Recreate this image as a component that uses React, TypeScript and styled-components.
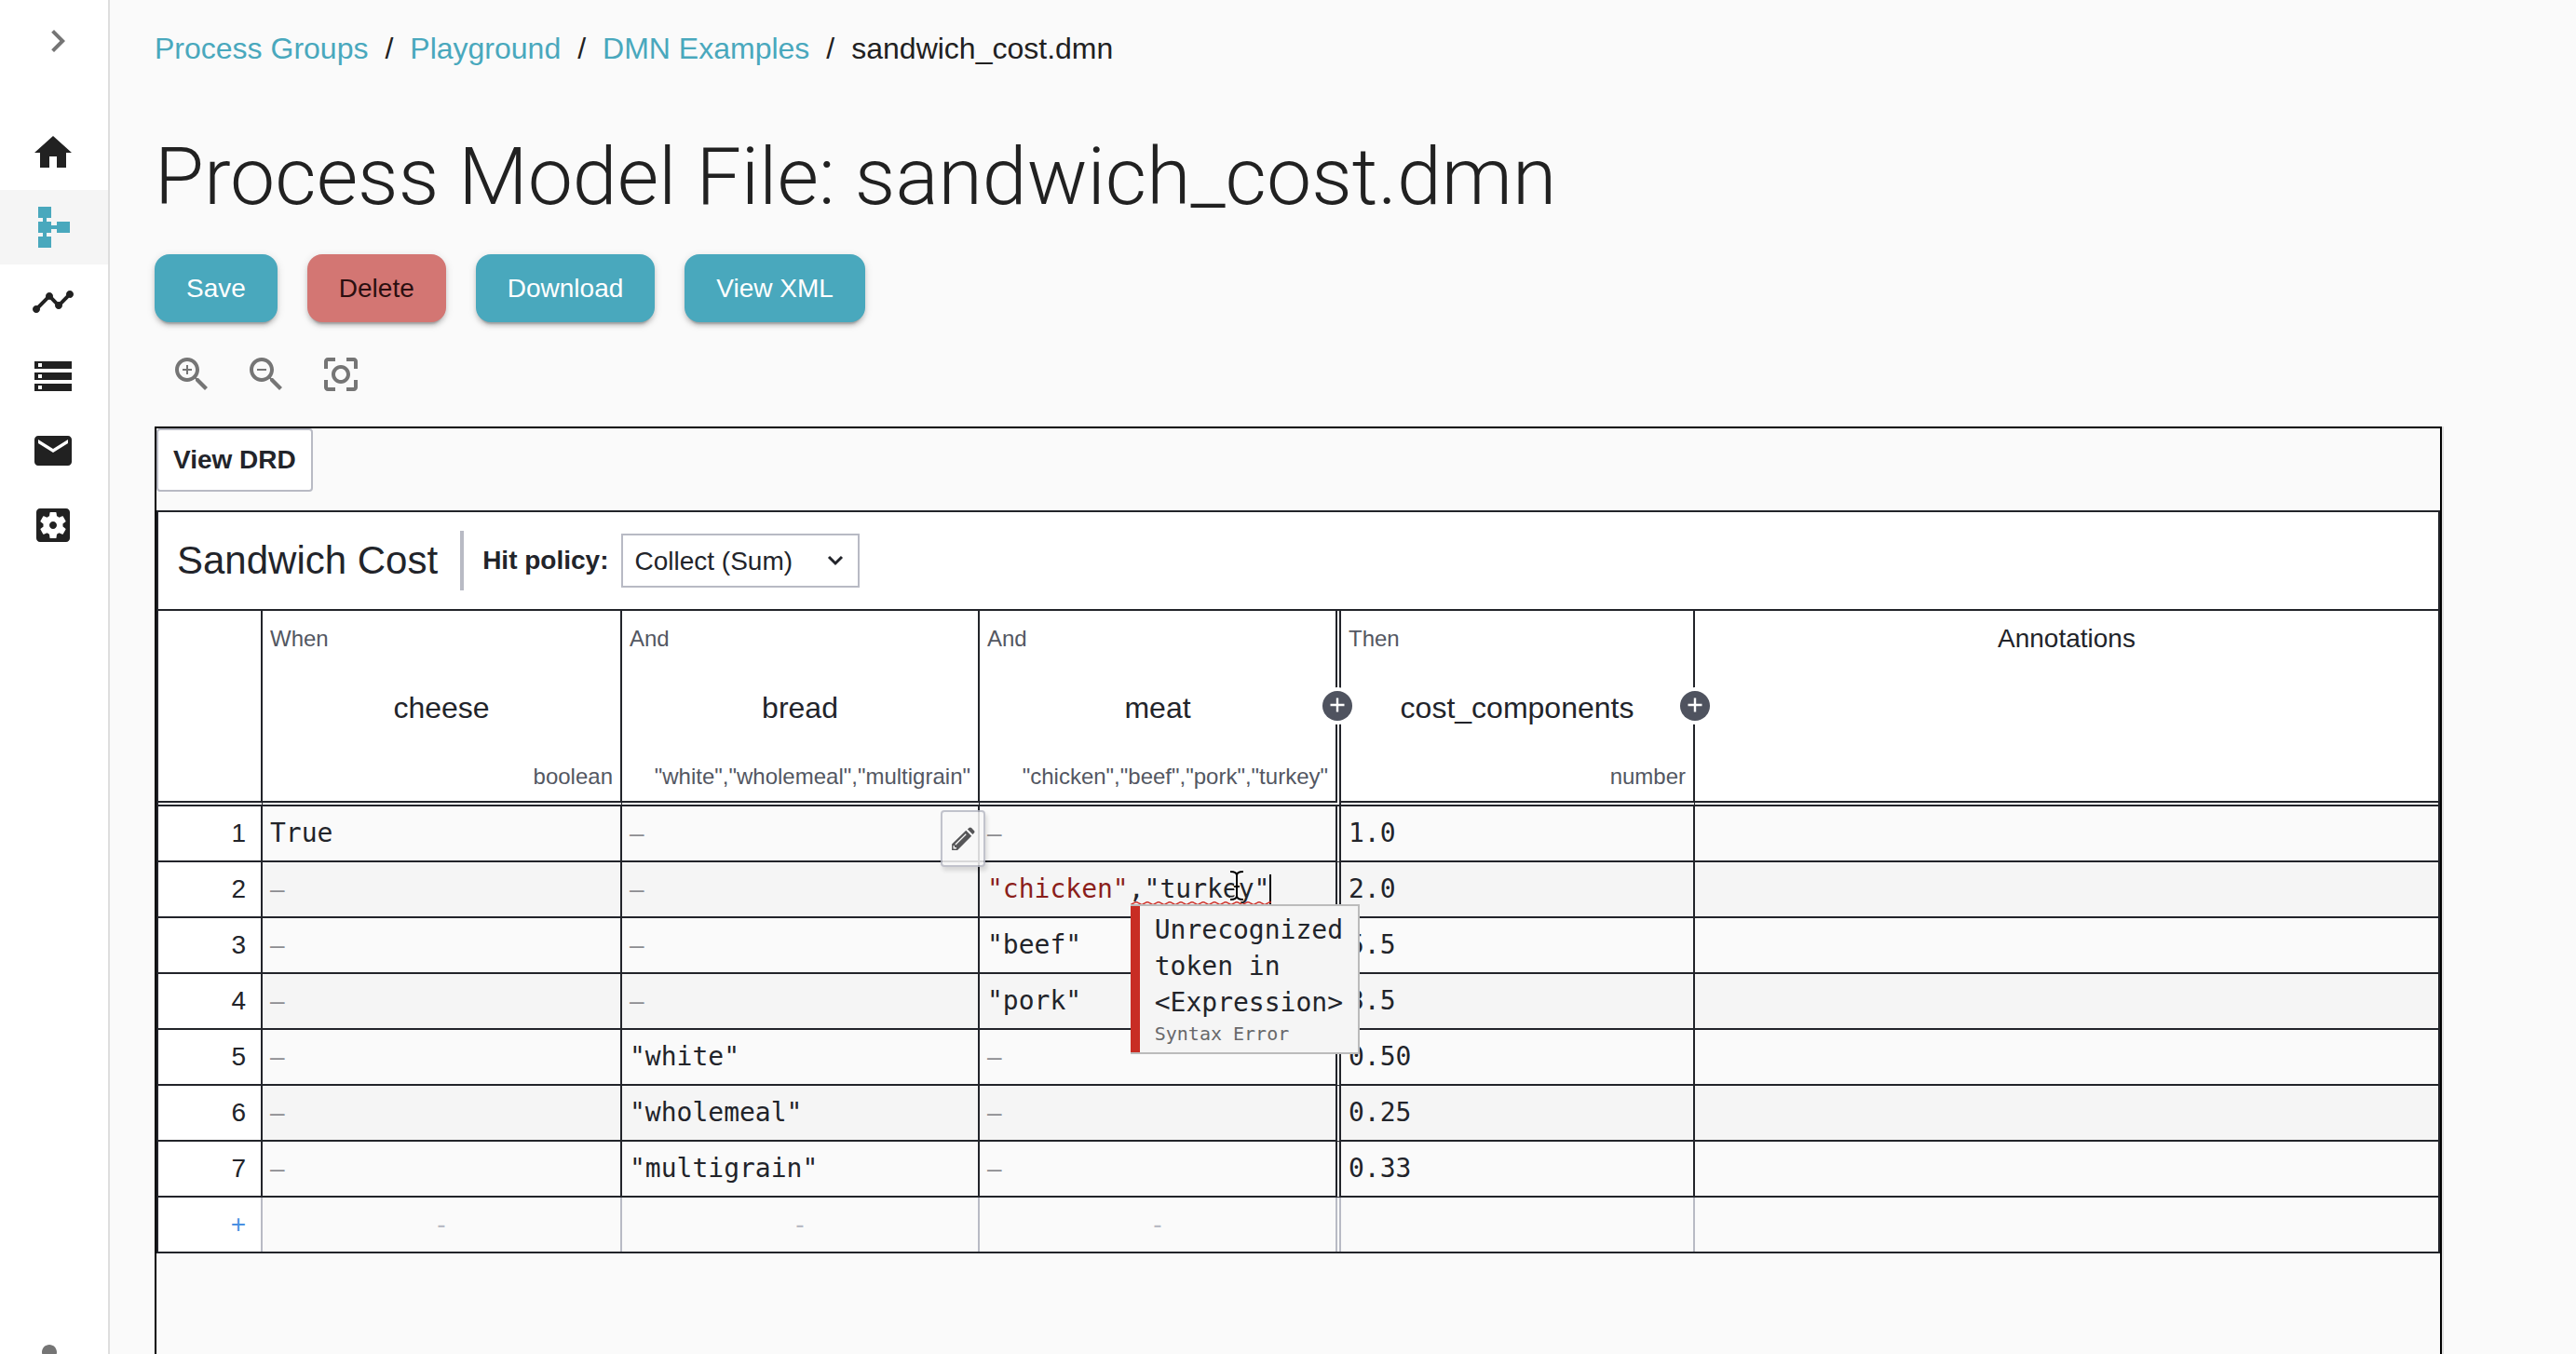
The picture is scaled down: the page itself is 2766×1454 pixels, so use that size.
import React from 'react';
import styled, { createGlobalStyle, css } from 'styled-components';

const sans = '"Liberation Sans", Arial, Helvetica, sans-serif';
const mono = '"DejaVu Sans Mono", Menlo, monospace';
const teal = '#49a8bd';
const ink = '#22242a';
const line = '#b8bac4';
const muted = '#757575';

const GlobalStyle = createGlobalStyle`
  *, *::before, *::after { box-sizing: border-box; }
  body { margin: 0; background: #fafafa; color: #212121; font-family: ${sans}; }
  button { font-family: inherit; cursor: pointer; }
`;

const Shell = styled.div`
  display: flex;
  height: 100vh;
  overflow: hidden;
`;

/* ---------- side navigation ---------- */

const Sidebar = styled.aside`
  flex: none;
  display: flex;
  flex-direction: column;
  width: 118px;
  background: #fff;
  border-right: 2px solid #dedede;
`;

const ExpandButton = styled.button`
  align-self: flex-start;
  margin: 20px 0 56px 38px;
  padding: 0;
  height: 48px;
  border: 0;
  background: none;
  color: ${muted};
`;

const NavList = styled.nav`
  display: flex;
  flex-direction: column;
`;

const NavLink = styled.a<{ $active?: boolean }>`
  display: flex;
  align-items: center;
  height: 80px;
  padding-left: 33px;
  color: ${p => (p.$active ? teal : '#212121')};
  background: ${p => (p.$active ? '#f5f5f5' : 'transparent')};
`;

const AccountButton = styled.button`
  align-self: flex-start;
  height: 48px;
  margin: auto 0 -30px 29px;
  padding: 0;
  border: 0;
  background: none;
  color: ${muted};
`;

const Glyph = styled.svg`
  display: block;
  flex: none;
  width: 48px;
  height: 48px;
  fill: currentColor;
`;

const Icon = ({ d }: { d: string }) => (
  <Glyph viewBox="0 0 24 24" aria-hidden="true"><path d={d} /></Glyph>
);

const icons = {
  chevron: 'M10 6 8.59 7.41 13.17 12l-4.58 4.59L10 18l6-6z',
  home: 'M10 20v-6h4v6h5v-8h3L12 3 2 12h3v8z',
  schema: 'M14 9v2h-3V9H8.5V7H11V1H4v6h2.5v2H4v6h2.5v2H4v6h7v-6H8.5v-2H11v-2h3v2h7V9h-7z',
  timeline: 'M23 8c0 1.1-.9 2-2 2-.18 0-.35-.02-.51-.07l-3.56 3.55c.05.16.07.34.07.52 0 1.1-.9 2-2 2s-2-.9-2-2c0-.18.02-.36.07-.52l-2.55-2.55c-.16.05-.34.07-.52.07s-.36-.02-.52-.07l-4.55 4.56c.05.16.07.33.07.51 0 1.1-.9 2-2 2s-2-.9-2-2 .9-2 2-2c.18 0 .35.02.51.07l4.56-4.55C8.02 9.36 8 9.18 8 9c0-1.1.9-2 2-2s2 .9 2 2c0 .18-.02.36-.07.52l2.55 2.55c.16-.05.34-.07.52-.07s.36.02.52.07l3.55-3.56C19.02 8.35 19 8.18 19 8c0-1.1.9-2 2-2s2 .9 2 2z',
  storage: 'M2 20h20v-4H2v4zm2-3h2v2H4v-2zM2 4v4h20V4H2zm4 3H4V5h2v2zm-4 7h20v-4H2v4zm2-3h2v2H4v-2z',
  mail: 'M20 4H4c-1.1 0-1.99.9-1.99 2L2 18c0 1.1.9 2 2 2h16c1.1 0 2-.9 2-2V6c0-1.1-.9-2-2-2zm0 4-8 5-8-5V6l8 5 8-5v2z',
  settings: 'M12 10c-1.1 0-2 .9-2 2s.9 2 2 2 2-.9 2-2-.9-2-2-2zm7-7H5c-1.11 0-2 .9-2 2v14c0 1.1.89 2 2 2h14c1.11 0 2-.9 2-2V5c0-1.1-.89-2-2-2zm-1.75 9c0 .23-.02.46-.05.68l1.48 1.16c.13.11.17.3.08.45l-1.4 2.42c-.09.15-.27.21-.43.15l-1.74-.7c-.36.28-.76.51-1.18.69l-.26 1.85c-.03.17-.18.3-.35.3h-2.8c-.17 0-.32-.13-.35-.29l-.26-1.85c-.43-.18-.82-.41-1.18-.69l-1.74.7c-.16.06-.34 0-.43-.15l-1.4-2.42c-.09-.15-.05-.34.08-.45l1.48-1.16c-.03-.23-.05-.46-.05-.69 0-.23.02-.46.05-.68l-1.48-1.16c-.13-.11-.17-.3-.08-.45l1.4-2.42c.09-.15.27-.21.43-.15l1.74.7c.36-.28.76-.51 1.18-.69l.26-1.85c.03-.17.18-.3.35-.3h2.8c.17 0 .32.13.35.29l.26 1.85c.43.18.82.41 1.18.69l1.74-.7c.16-.06.34 0 .43.15l1.4 2.42c.09.15.05.34-.08.45l-1.48 1.16c.03.23.05.46.05.69z',
  person: 'M12 12c2.21 0 4-1.79 4-4s-1.79-4-4-4-4 1.79-4 4 1.79 4 4 4zm0 2c-2.67 0-8 1.34-8 4v2h16v-2c0-2.66-5.33-4-8-4z',
  zoomIn: 'M15.5 14h-.79l-.28-.27C15.41 12.59 16 11.11 16 9.5 16 5.91 13.09 3 9.5 3S3 5.91 3 9.5 5.91 16 9.5 16c1.61 0 3.09-.59 4.23-1.57l.27.28v.79l5 4.99L20.49 19l-4.99-5zm-6 0C7.01 14 5 11.99 5 9.5S7.01 5 9.5 5 14 7.01 14 9.5 11.99 14 9.5 14zm2.5-4h-2v2H9v-2H7V9h2V7h1v2h2v1z',
  zoomOut: 'M15.5 14h-.79l-.28-.27C15.41 12.59 16 11.11 16 9.5 16 5.91 13.09 3 9.5 3S3 5.91 3 9.5 5.91 16 9.5 16c1.61 0 3.09-.59 4.23-1.57l.27.28v.79l5 4.99L20.49 19l-4.99-5zm-6 0C7.01 14 5 11.99 5 9.5S7.01 5 9.5 5 14 7.01 14 9.5 11.99 14 9.5 14zM7 9h5v1H7z',
  fit: 'M5 15H3v4c0 1.1.9 2 2 2h4v-2H5v-4zM5 5h4V3H5c-1.1 0-2 .9-2 2v4h2V5zm14-2h-4v2h4v4h2V5c0-1.1-.9-2-2-2zm0 16h-4v2h4c1.1 0 2-.9 2-2v-4h-2v4zM12 7c-2.76 0-5 2.24-5 5s2.24 5 5 5 5-2.24 5-5-2.24-5-5-5zm0 8c-1.65 0-3-1.35-3-3s1.35-3 3-3 3 1.35 3 3-1.35 3-3 3z',
};

/* ---------- page head ---------- */

const Main = styled.main`
  flex: 1;
  min-width: 0;
  display: flex;
  flex-direction: column;
  padding: 28px 144px 0 48px;
`;

const Crumbs = styled.ol`
  display: flex;
  margin: 0 0 64px;
  padding: 0;
  list-style: none;
  font-size: 32px;
  line-height: 48px;

  li + li::before {
    content: '/';
    margin: 0 18px;
  }
`;

const CrumbLink = styled.a`
  color: ${teal};
  text-decoration: none;
`;

const Title = styled.h1`
  margin: 0 0 33px;
  font-family: Roboto, ${sans};
  font-size: 86px;
  font-weight: 300;
  line-height: 100px;
`;

const Actions = styled.div`
  display: flex;
  gap: 32px;
  margin-bottom: 16px;
`;

const Action = styled.button<{ $danger?: boolean }>`
  height: 73px;
  padding: 0 34px;
  border: 0;
  border-radius: 16px;
  background: ${p => (p.$danger ? '#d37673' : teal)};
  color: ${p => (p.$danger ? '#2b0f10' : '#fff')};
  font-size: 28px;
  box-shadow: 0 6px 2px -4px rgba(0, 0, 0, 0.2), 0 4px 4px rgba(0, 0, 0, 0.14), 0 2px 10px rgba(0, 0, 0, 0.12);
`;

const ZoomBar = styled.div`
  display: flex;
  margin-bottom: 16px;
`;

const ZoomButton = styled.button`
  padding: 16px;
  border: 0;
  background: none;
  color: ${muted};
`;

/* ---------- decision editor ---------- */

const Editor = styled.section`
  flex: 1;
  min-height: 0;
  border: 2px solid #000;
  border-bottom: 0;
  box-shadow: 2px 0 0 #dedede;
`;

const DrdButton = styled.button`
  display: block;
  height: 68px;
  margin-bottom: 20px;
  padding: 0 16px;
  border: 2px solid ${line};
  border-radius: 4px;
  background: #fff;
  color: ${ink};
  font-size: 28px;
  font-weight: 700;
`;

const Decision = styled.div`
  border: 2px solid ${ink};
  color: ${ink};
`;

const DecisionHead = styled.header`
  display: flex;
  align-items: center;
  height: 106px;
  padding-left: 20px;
  border-bottom: 2px solid ${ink};
  background: #fff;
  font-size: 28px;
`;

const DecisionName = styled.h2`
  margin: 0;
  padding-right: 24px;
  border-right: 4px solid ${line};
  font-size: 42px;
  font-weight: 400;
  line-height: 64px;
`;

const PolicyLabel = styled.label`
  margin: 0 14px 0 20px;
  font-weight: 700;
`;

const SelectBox = styled.span`
  position: relative;
  display: flex;
`;

const PolicySelect = styled.select`
  appearance: none;
  width: 256px;
  height: 58px;
  padding: 0 12px;
  border: 2px solid ${line};
  border-radius: 0;
  background: #fff;
  color: ${ink};
  font-family: inherit;
  font-size: 28px;
`;

const SelectArrow = styled.svg`
  position: absolute;
  right: 16px;
  top: 22px;
  width: 20px;
  height: 14px;
  pointer-events: none;
`;

const Table = styled.table`
  width: 100%;
  table-layout: fixed;
  border-collapse: separate;
  border-spacing: 0;
`;

const edge = css<{ $edge?: 'double' | 'none' }>`
  border-right: ${p => (p.$edge === 'double' ? '6px double' : p.$edge === 'none' ? '0 none' : '2px solid')} ${ink};
`;

const HeadCell = styled.th<{ $edge?: 'double' | 'none' }>`
  position: relative;
  padding: 0;
  border-bottom: 6px double ${ink};
  ${edge}
  background: #fff;
  font-weight: 400;
`;

const Clause = styled.div`
  display: flex;
  flex-direction: column;
  justify-content: space-between;
  height: 204px;
  padding: 16px 8px 12px;
  color: #535762;
  font-size: 24px;
  line-height: 28px;
  text-align: left;
`;

const ClauseName = styled.span`
  color: ${ink};
  font-size: 32px;
  line-height: 36px;
  text-align: center;
`;

const ClauseType = styled.span`
  text-align: right;
  white-space: nowrap;
`;

const Annotations = styled.div`
  height: 204px;
  padding-top: 14px;
  font-size: 28px;
  line-height: 32px;
`;

const AddClause = styled.button`
  position: absolute;
  z-index: 1;
  top: 86px;
  right: -18px;
  width: 32px;
  height: 32px;
  padding: 0;
  border: 0;
  border-radius: 50%;
  background: #4f535f;
  box-shadow: 0 0 0 4px #fff;

  svg { display: block; }
`;

const Rule = styled.tr`
  background: #fafafa;
  &:nth-child(even) { background: #f5f5f5; }
`;

const cell = css`
  height: 60px;
  padding: 0 8px;
  border-bottom: 2px solid ${ink};
  font-size: 28px;
  line-height: 32px;
`;

const IndexCell = styled.th`
  ${cell}
  padding-right: 16px;
  border-right: 2px solid ${ink};
  background: #fff;
  font-weight: 400;
  text-align: right;
`;

const RuleCell = styled.td<{ $edge?: 'double' | 'none'; $empty?: boolean }>`
  ${cell}
  ${edge}
  position: relative;
  color: ${p => (p.$empty ? '#8c8c90' : ink)};
  font-family: ${p => (p.$empty ? sans : mono)};
  white-space: nowrap;
`;

const NewRow = styled.tr`
  th, td {
    height: 58px;
    border-bottom: 0;
    border-right-color: ${line};
  }
  td {
    color: ${line};
    font-family: ${sans};
    text-align: center;
  }
`;

const AddRule = styled.button`
  padding: 0;
  border: 0;
  background: none;
  color: #4a90e2;
  font-size: 28px;
  line-height: 32px;
`;

const EditButton = styled.button`
  position: absolute;
  z-index: 2;
  left: -42px;
  top: 4px;
  display: flex;
  align-items: center;
  justify-content: center;
  width: 48px;
  height: 61px;
  padding: 0;
  border: 2px solid ${line};
  border-radius: 4px;
  background: #f8f8f8;
  box-shadow: 2px 4px 4px rgba(0, 0, 0, 0.14);
  opacity: 0.85;
`;

const StringToken = styled.span`
  color: #8b1f1b;
`;

const LintRange = styled.span`
  position: relative;
  display: inline-block;
  border-right: 2px solid #000;
`;

const Squiggle = styled.svg`
  position: absolute;
  left: 2px;
  top: 29px;
  width: 100%;
  height: 4px;
`;

const Pointer = styled.svg`
  position: absolute;
  left: 108px;
  top: -5px;
  width: 16px;
  height: 34px;
`;

const LintTip = styled.div`
  position: absolute;
  z-index: 3;
  left: 2px;
  top: 32px;
  width: 246px;
  border: 2px solid #bbb;
  border-left: 0;
  background: #f5f5f5;
  color: ${ink};
  white-space: normal;
`;

const LintMessage = styled.div`
  padding: 6px 12px 6px 16px;
  border-left: 10px solid #c82d24;
  line-height: 39px;
`;

const LintSource = styled.small`
  display: block;
  color: #68686a;
  font-size: 20px;
  line-height: 28px;
`;

const PlusMark = () => (
  <svg viewBox="0 0 32 32" width="32" height="32" aria-hidden="true">
    <path d="M16 7.5v15M8.5 15h15" stroke="#fff" strokeWidth="2.4" />
  </svg>
);

const navItems = [
  { label: 'Home', icon: icons.home },
  { label: 'Processes', icon: icons.schema, active: true },
  { label: 'Process Instances', icon: icons.timeline },
  { label: 'Data Stores', icon: icons.storage },
  { label: 'Messages', icon: icons.mail },
  { label: 'Configuration', icon: icons.settings },
];

const rules = [
  ['True', '', '', '1.0'],
  ['', '', 'edit', '2.0'],
  ['', '', '"beef"', '5.5'],
  ['', '', '"pork"', '3.5'],
  ['', '"white"', '', '0.50'],
  ['', '"wholemeal"', '', '0.25'],
  ['', '"multigrain"', '', '0.33'],
];

const EditedExpression = () => (
  <>
    <StringToken>"chicken"</StringToken>
    <LintRange>
      ,"turkey"
      <Squiggle aria-hidden="true">
        <defs>
          <pattern id="wave" width="12" height="4" patternUnits="userSpaceOnUse">
            <path d="M-1 3.5C2 3.5 4 .8 6 .8S10 3.5 13 3.5" fill="none" stroke="#d0332b" strokeWidth="1.4" />
          </pattern>
        </defs>
        <rect width="100%" height="4" fill="url(#wave)" />
      </Squiggle>
      <Pointer viewBox="0 0 16 34" aria-hidden="true">
        <path d="M1 2c4 0 7 1 7 4 0-3 3-4 7-4M1 32c4 0 7-1 7-4 0 3 3 4 7 4M8 5v24M5 18h6" fill="none" stroke="#fff" strokeWidth="5" />
        <path d="M1 2c4 0 7 1 7 4 0-3 3-4 7-4M1 32c4 0 7-1 7-4 0 3 3 4 7 4M8 5v24M5 18h6" fill="none" stroke="#000" strokeWidth="2" />
      </Pointer>
      <LintTip role="tooltip">
        <LintMessage>
          Unrecognized token in &lt;Expression&gt;
          <LintSource>Syntax Error</LintSource>
        </LintMessage>
      </LintTip>
    </LintRange>
  </>
);

export default function App() {
  return (
    <Shell>
      <GlobalStyle />
      <Sidebar>
        <ExpandButton aria-label="Expand navigation"><Icon d={icons.chevron} /></ExpandButton>
        <NavList>
          {navItems.map(item => (
            <NavLink key={item.label} href="#" aria-label={item.label} $active={item.active}>
              <Icon d={item.icon} />
            </NavLink>
          ))}
        </NavList>
        <AccountButton aria-label="Account"><Icon d={icons.person} /></AccountButton>
      </Sidebar>

      <Main>
        <nav aria-label="Breadcrumb">
          <Crumbs>
            <li><CrumbLink href="#">Process Groups</CrumbLink></li>
            <li><CrumbLink href="#">Playground</CrumbLink></li>
            <li><CrumbLink href="#">DMN Examples</CrumbLink></li>
            <li>sandwich_cost.dmn</li>
          </Crumbs>
        </nav>

        <Title>Process Model File: sandwich_cost.dmn</Title>

        <Actions>
          <Action>Save</Action>
          <Action $danger>Delete</Action>
          <Action>Download</Action>
          <Action>View XML</Action>
        </Actions>

        <ZoomBar>
          <ZoomButton aria-label="Zoom in"><Icon d={icons.zoomIn} /></ZoomButton>
          <ZoomButton aria-label="Zoom out"><Icon d={icons.zoomOut} /></ZoomButton>
          <ZoomButton aria-label="Fit to screen"><Icon d={icons.fit} /></ZoomButton>
        </ZoomBar>

        <Editor>
          <DrdButton>View DRD</DrdButton>
          <Decision>
            <DecisionHead>
              <DecisionName>Sandwich Cost</DecisionName>
              <PolicyLabel htmlFor="hit-policy">Hit policy:</PolicyLabel>
              <SelectBox>
                <PolicySelect id="hit-policy" defaultValue="sum">
                  <option value="sum">Collect (Sum)</option>
                </PolicySelect>
                <SelectArrow viewBox="0 0 20 14" aria-hidden="true">
                  <path d="M3 3l7 7 7-7" fill="none" stroke={ink} strokeWidth="3" />
                </SelectArrow>
              </SelectBox>
            </DecisionHead>

            <Table>
              <colgroup>
                <col width="112" />
                <col width="386" />
                <col width="384" />
                <col width="388" />
                <col width="380" />
                <col />
              </colgroup>
              <thead>
                <tr>
                  <HeadCell aria-label="Rule" />
                  <HeadCell>
                    <Clause>When<ClauseName>cheese</ClauseName><ClauseType>boolean</ClauseType></Clause>
                  </HeadCell>
                  <HeadCell>
                    <Clause>And<ClauseName>bread</ClauseName><ClauseType>"white","wholemeal","multigrain"</ClauseType></Clause>
                  </HeadCell>
                  <HeadCell $edge="double">
                    <Clause>And<ClauseName>meat</ClauseName><ClauseType>"chicken","beef","pork","turkey"</ClauseType></Clause>
                    <AddClause aria-label="Add input"><PlusMark /></AddClause>
                  </HeadCell>
                  <HeadCell>
                    <Clause>Then<ClauseName>cost_components</ClauseName><ClauseType>number</ClauseType></Clause>
                    <AddClause aria-label="Add output"><PlusMark /></AddClause>
                  </HeadCell>
                  <HeadCell $edge="none"><Annotations>Annotations</Annotations></HeadCell>
                </tr>
              </thead>
              <tbody>
                {rules.map((values, row) => (
                  <Rule key={row}>
                    <IndexCell scope="row">{row + 1}</IndexCell>
                    {values.map((value, col) => (
                      <RuleCell key={col} $edge={col === 2 ? 'double' : undefined} $empty={value === ''}>
                        {value === 'edit' ? <EditedExpression /> : value || '–'}
                        {row === 0 && col === 2 && (
                          <EditButton aria-label="Edit cell">
                            <svg viewBox="0 0 24 24" width="26" height="26" aria-hidden="true">
                              <path d="M1 23v-6L15 3.5l5.5 5.5L6.5 23zM16.5 2.3l1.5-1.4c.8-.7 1.7-.6 2.4.1l2.6 2.6c.7.7.7 1.7 0 2.4l-1.4 1.4z" fill="#3a3a3c" />
                              <path d="M4.5 17.5 15 7.2M3 18.5v2.5h2.5" fill="none" stroke="#f8f8f8" strokeWidth="1.2" />
                            </svg>
                          </EditButton>
                        )}
                      </RuleCell>
                    ))}
                    <RuleCell $edge="none" />
                  </Rule>
                ))}
                <NewRow>
                  <IndexCell scope="row"><AddRule aria-label="Add rule">+</AddRule></IndexCell>
                  <RuleCell>-</RuleCell>
                  <RuleCell>-</RuleCell>
                  <RuleCell $edge="double">-</RuleCell>
                  <RuleCell />
                  <RuleCell $edge="none" />
                </NewRow>
              </tbody>
            </Table>
          </Decision>
        </Editor>
      </Main>
    </Shell>
  );
}
